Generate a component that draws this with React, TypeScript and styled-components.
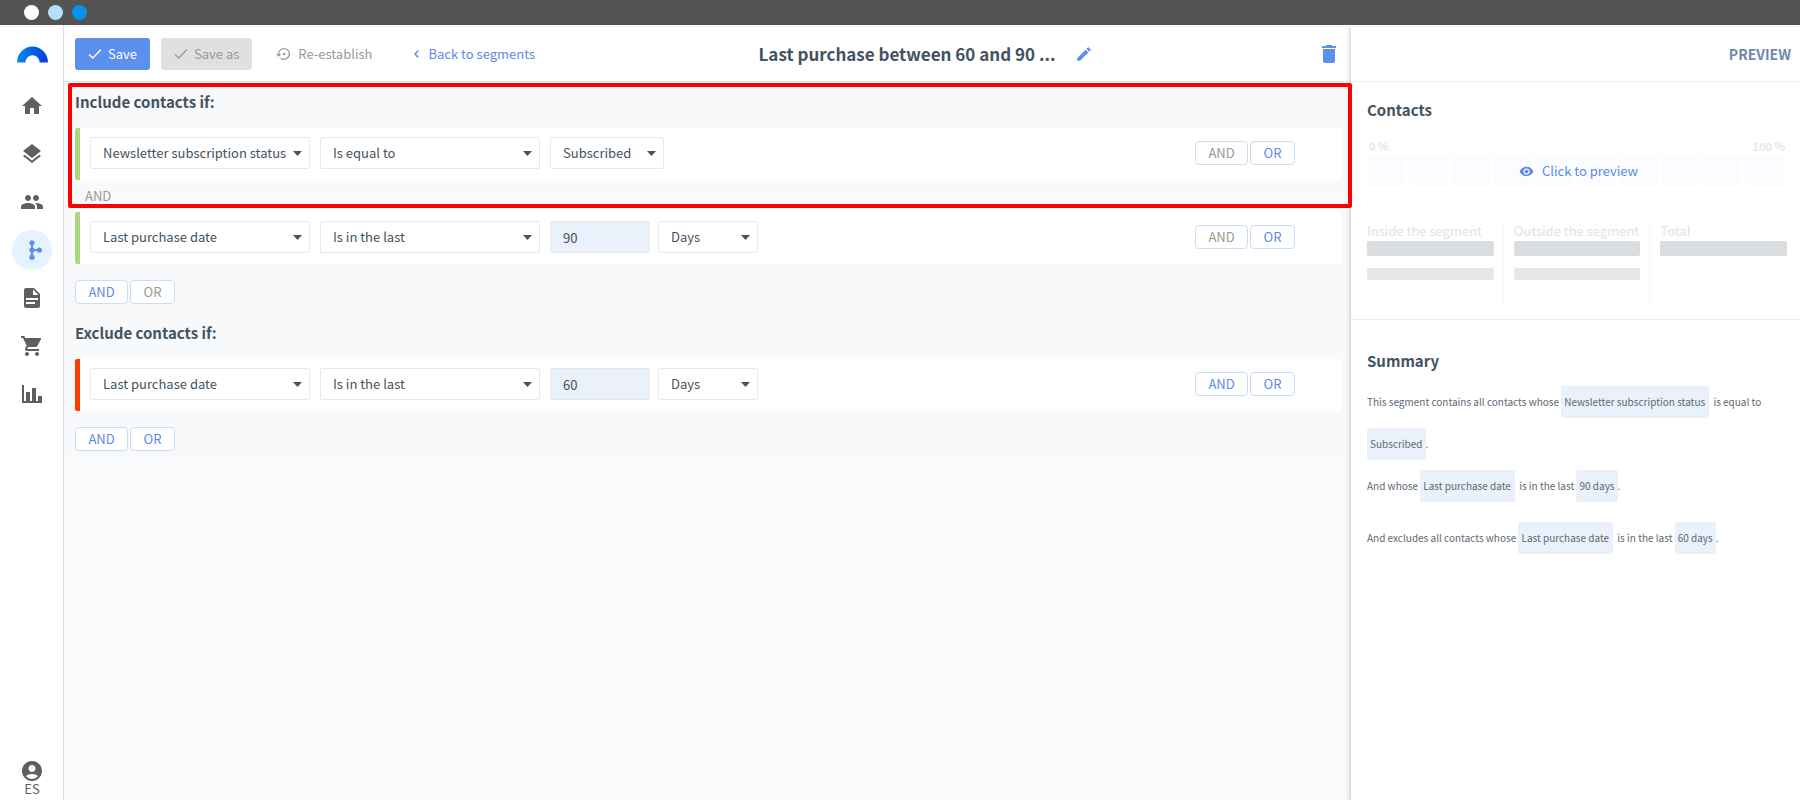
import React from 'react';
import styled, { createGlobalStyle } from 'styled-components';
import {
  MdAccountCircle,
  MdDelete,
  MdEdit,
  MdHome,
  MdLayers,
  MdPeople,
  MdSettingsBackupRestore,
  MdShoppingCart,
  MdVisibility,
} from 'react-icons/md';

const GlobalStyle = createGlobalStyle`
  *, *::before, *::after { box-sizing: border-box; }
  body {
    margin: 0;
    background: #fff;
    color: #43535f;
    font-family: 'Noto Sans CJK SC', 'Noto Sans', sans-serif;
    font-size: 13px;
    line-height: 20px;
  }
  button, input, select { font: inherit; color: inherit; margin: 0; }
  h1, h2, p { margin: 0; }
`;

const Page = styled.div`
  display: flex;
  flex-direction: column;
  min-height: 100vh;
`;

const WindowBar = styled.div`
  display: flex;
  align-items: center;
  gap: 9px;
  height: 25px;
  padding-left: 24px;
  background: #535353;
`;

const WindowDot = styled.span<{ $color: string }>`
  width: 15px;
  height: 15px;
  border-radius: 50%;
  background: ${(p) => p.$color};
`;

const Shell = styled.div`
  flex: 1;
  display: grid;
  grid-template-columns: 64px minmax(0, 1fr) 449px;
`;

const Sidebar = styled.nav`
  display: flex;
  flex-direction: column;
  align-items: center;
  padding: 21px 0 5px;
  box-shadow: inset -1px 0 #dcdcdc;
  color: #5f5f5f;
`;

const Logo = styled.a`
  display: block;
  height: 40px;
`;

const NavList = styled.div`
  display: flex;
  flex-direction: column;
  gap: 8px;
`;

const NavItem = styled.a<{ $active?: boolean }>`
  display: flex;
  align-items: center;
  justify-content: center;
  width: 40px;
  height: 40px;
  border-radius: 50%;
  color: ${(p) => (p.$active ? '#5c90ee' : 'inherit')};
  background: ${(p) => (p.$active ? '#e5f2ff' : 'transparent')};
`;

const Account = styled.button`
  display: flex;
  flex-direction: column;
  align-items: center;
  margin-top: auto;
  padding: 0;
  border: 0;
  background: none;
  font-size: 13px;
  line-height: 12px;
`;

const Editor = styled.main`
  display: flex;
  flex-direction: column;
  min-width: 0;
  background: #fafafa;
`;

const Header = styled.header`
  display: flex;
  align-items: center;
  height: 57px;
  padding: 2px 10px 0 11px;
  border-bottom: 1px solid #e6e7e9;
  background: #fff;
`;

const ActionButton = styled.button<{ $kind: 'primary' | 'muted' | 'plain' }>`
  display: flex;
  align-items: center;
  gap: 6px;
  height: 32px;
  padding: 0 13px;
  border: 0;
  border-radius: 3px;
  white-space: nowrap;
  color: ${(p) => (p.$kind === 'primary' ? '#fff' : '#999')};
  background: ${(p) => ({ primary: '#5c90ee', muted: '#e0e0e0', plain: 'transparent' })[p.$kind]};
`;

const Actions = styled.div`
  display: flex;
  align-items: center;
  gap: 11px;
`;

const BackLink = styled.a`
  display: flex;
  align-items: center;
  gap: 9px;
  margin-left: 29px;
  color: #5c8ae6;
  text-decoration: none;
  white-space: nowrap;
`;

const TitleArea = styled.div`
  flex: 1;
  display: flex;
  align-items: center;
  justify-content: center;
  gap: 20px;
  min-width: 0;
`;

const Title = styled.h1`
  overflow: hidden;
  font-size: 17px;
  line-height: 24px;
  font-weight: 700;
  text-overflow: ellipsis;
  white-space: nowrap;
`;

const IconButton = styled.button`
  display: flex;
  padding: 0;
  border: 0;
  background: none;
  color: #5c90ee;
`;

const Builder = styled.div`
  padding: 0 10px 0 11px;
  background: #f8f9fb;
`;

const Group = styled.section`
  position: relative;
`;

const GroupTitle = styled.h2`
  padding: 8px 0 14px;
  font-size: 15px;
  line-height: 24px;
  font-weight: 700;
`;

const Highlight = styled.div`
  position: absolute;
  top: 1px;
  left: -7px;
  right: -11px;
  height: 125px;
  border: 4px solid #f00;
  border-radius: 2px;
  pointer-events: none;
  z-index: 2;
`;

const Rule = styled.div<{ $tone: string }>`
  display: flex;
  align-items: center;
  gap: 10px;
  height: 52px;
  padding: 0 46px 2px 10px;
  border-left: 5px solid ${(p) => p.$tone};
  border-radius: 2px;
  background: #fff;
`;

const Joiner = styled.div`
  display: flex;
  align-items: center;
  gap: 5px;
  height: 32px;
  padding-left: 10px;
  color: #999;

  &::after {
    content: '';
    flex: 1;
    height: 1px;
    background: #fbfcfd;
  }
`;

const SelectBox = styled.span<{ $width: number }>`
  display: grid;
  align-items: center;
  width: ${(p) => p.$width}px;

  > * { grid-area: 1 / 1; }
  > svg { justify-self: end; margin-right: 8px; pointer-events: none; }
`;

const Select = styled.select`
  appearance: none;
  width: 100%;
  height: 32px;
  padding: 0 18px 0 12px;
  border: 1px solid #e6e8ea;
  border-radius: 2px;
  background: #fff;
`;

const Period = styled.div`
  display: flex;
  gap: 8px;
`;

const AmountInput = styled.input`
  width: 100px;
  height: 32px;
  padding: 0 12px;
  border: 1px solid #e6e8ea;
  border-radius: 2px;
  background: #eaf1fb;
`;

const LogicButtons = styled.div<{ $inRow?: boolean }>`
  display: flex;
  gap: 2px;
  margin-left: ${(p) => (p.$inRow ? 'auto' : '0')};
  padding: ${(p) => (p.$inRow ? '0' : '16px 0 9px')};
`;

const LogicButton = styled.button<{ $wide?: boolean }>`
  width: ${(p) => (p.$wide ? 53 : 45)}px;
  height: 24px;
  padding: 0;
  border: 1px solid #c9dcf8;
  border-radius: 4px;
  background: #fff;
  color: #5c8ae6;
  line-height: 22px;

  &:disabled { color: #999; }
`;

const Preview = styled.aside`
  z-index: 1;
  background: #fff;
  box-shadow: 0 2px 5px rgba(0, 0, 0, 0.3);
  clip-path: inset(0 0 0 -8px);
`;

const PreviewHeader = styled.header`
  display: flex;
  align-items: center;
  justify-content: flex-end;
  height: 57px;
  padding: 2px 9px 0 0;
  border-bottom: 1px solid #ebecee;
  color: #7088ab;
  font-size: 14px;
  font-weight: 700;
`;

const PreviewSection = styled.section`
  padding: 16px 13px 15px 16px;
  border-bottom: 1px solid #ebecee;
`;

const SummarySection = styled.section`
  padding: 29px 15px 29px 16px;
`;

const PreviewTitle = styled.h2`
  font-size: 15px;
  line-height: 24px;
  font-weight: 700;
`;

const Scale = styled.div`
  display: flex;
  justify-content: space-between;
  padding: 15px 2px 0 2px;
  color: #e6e7e9;
  font-size: 11px;
  line-height: 19px;
  font-weight: 700;
`;

const Gauge = styled.div`
  display: grid;
  align-items: center;
  margin-right: 3px;

  > * { grid-area: 1 / 1; }
`;

const GaugeCells = styled.div`
  display: grid;
  grid-template-columns: repeat(10, 1fr);
  gap: 3px;
  height: 30px;
`;

const GaugeCell = styled.span`
  background: #fbfcff;
`;

const PreviewButton = styled.button`
  justify-self: center;
  display: flex;
  align-items: center;
  gap: 8px;
  padding: 0 0 0 6px;
  border: 0;
  background: none;
  color: #5c8ae6;
`;

const Stats = styled.div`
  display: grid;
  grid-template-columns: repeat(3, minmax(0, 1fr));
  column-gap: 20px;
  padding-top: 35px;
`;

const Stat = styled.div`
  display: flex;
  flex-direction: column;
  height: 83px;
  color: #dfe2e4;
  line-height: 20px;
  white-space: nowrap;

  & + & {
    margin-left: -11px;
    padding-left: 10px;
    border-left: 1px solid #f6f7f8;
  }
`;

const Placeholder = styled.span<{ $small?: boolean }>`
  height: ${(p) => (p.$small ? 12 : 15)}px;
  margin-top: ${(p) => (p.$small ? 12 : 0)}px;
  border-radius: 2px;
  background: ${(p) => (p.$small ? '#e6e7e8' : '#dadddf')};
`;

const SummaryText = styled.div`
  margin-top: 8px;
  color: #5d6974;
  font-size: 10px;
  line-height: 42px;
`;

const Sentence = styled.p<{ $apart?: boolean }>`
  margin-top: ${(p) => (p.$apart ? 10 : 0)}px;
`;

const Chip = styled.span<{ $field?: boolean }>`
  display: inline-block;
  margin: 0 ${(p) => (p.$field ? 2 : 0)}px 0 0;
  padding: 0 ${(p) => (p.$field ? 4 : 3)}px 0 3px;
  border-radius: 2px;
  background: #eaf1fb;
  line-height: 32px;
`;

const Check = () => (
  <svg width="14" height="12" viewBox="0 0 14 12" fill="none" stroke="currentColor" strokeWidth="1.3" aria-hidden>
    <path d="M1 6.5 4.8 10 13 1.5" />
  </svg>
);

const Caret = () => (
  <svg width="9" height="5" viewBox="0 0 9 5" fill="#43535f" aria-hidden>
    <path d="M0 0h9L4.5 5z" />
  </svg>
);

const Chevron = () => (
  <svg width="5" height="8" viewBox="0 0 5 8" fill="none" stroke="currentColor" strokeWidth="1.4" aria-hidden>
    <path d="M4.3.6 1 4l3.3 3.4" />
  </svg>
);

const BranchIcon = () => (
  <svg width="24" height="24" viewBox="0 0 24 24" fill="currentColor" aria-hidden>
    <path d="M12 5v14M12 12h7.5" stroke="currentColor" strokeWidth="2" />
    <circle cx="12" cy="4.8" r="2.6" />
    <circle cx="12" cy="12" r="2.6" />
    <circle cx="12" cy="19.2" r="2.6" />
    <circle cx="19.4" cy="12" r="2.6" />
  </svg>
);

const DocumentIcon = () => (
  <svg width="24" height="24" viewBox="0 0 24 24" fill="currentColor" fillRule="evenodd" aria-hidden>
    <path d="M6 2h8l6 6v12a2 2 0 0 1-2 2H6a2 2 0 0 1-2-2V4a2 2 0 0 1 2-2zm7 1.5V9h5.5zM6 12v2h12v-2zm0 4v2h9v-2z" />
  </svg>
);

const ChartIcon = () => (
  <svg width="24" height="24" viewBox="0 0 24 24" fill="currentColor" aria-hidden>
    <path d="M2 3h2v16h18v2H2zM6 10h4v9H6zM12 6h4v13h-4zM18 14h4v5h-4z" />
  </svg>
);

const Dropdown = ({ label, width, options }: { label: string; width: number; options: string[] }) => (
  <SelectBox $width={width}>
    <Select aria-label={label} defaultValue={options[0]}>
      {options.map((o) => (
        <option key={o}>{o}</option>
      ))}
    </Select>
    <Caret />
  </SelectBox>
);

const Logic = ({ inRow, and = true, or = true }: { inRow?: boolean; and?: boolean; or?: boolean }) => (
  <LogicButtons $inRow={inRow}>
    <LogicButton $wide disabled={!and}>AND</LogicButton>
    <LogicButton disabled={!or}>OR</LogicButton>
  </LogicButtons>
);

const DateRule = ({ tone, days, and }: { tone: string; days: string; and: boolean }) => (
  <Rule $tone={tone}>
    <Dropdown label="Field" width={220} options={['Last purchase date', 'Newsletter subscription status']} />
    <Dropdown label="Condition" width={220} options={['Is in the last', 'Is not in the last']} />
    <Period>
      <AmountInput aria-label="Amount" defaultValue={days} />
      <Dropdown label="Unit" width={100} options={['Days', 'Weeks', 'Months']} />
    </Period>
    <Logic inRow and={and} />
  </Rule>
);

const GREEN = '#aed581';
const RED = '#ff3d00';

export default function App() {
  return (
    <Page>
      <GlobalStyle />
      <WindowBar>
        <WindowDot $color="#fff" />
        <WindowDot $color="#b3e0fb" />
        <WindowDot $color="#0693ee" />
      </WindowBar>
      <Shell>
        <Sidebar aria-label="Main">
          <Logo href="#" aria-label="Dashboard">
            <svg width="31" height="17" viewBox="0 0 31 17" aria-hidden>
              <defs>
                <linearGradient id="arch">
                  <stop offset="0" stopColor="#0b8cf0" />
                  <stop offset="0.5" stopColor="#0560e2" />
                  <stop offset="1" stopColor="#0540d8" />
                </linearGradient>
              </defs>
              <path d="M0 16.5a15.5 16 0 0 1 31 0h-8.5a7 7.3 0 0 0-14 0z" fill="url(#arch)" />
            </svg>
          </Logo>
          <NavList>
            <NavItem href="#" aria-label="Home"><MdHome size={24} /></NavItem>
            <NavItem href="#" aria-label="Campaigns"><MdLayers size={24} /></NavItem>
            <NavItem href="#" aria-label="Contacts"><MdPeople size={24} /></NavItem>
            <NavItem href="#" aria-label="Segments" $active><BranchIcon /></NavItem>
            <NavItem href="#" aria-label="Content"><DocumentIcon /></NavItem>
            <NavItem href="#" aria-label="Store"><MdShoppingCart size={24} /></NavItem>
            <NavItem href="#" aria-label="Reports"><ChartIcon /></NavItem>
          </NavList>
          <Account>
            <MdAccountCircle size={24} />
            ES
          </Account>
        </Sidebar>

        <Editor>
          <Header>
            <Actions>
              <ActionButton $kind="primary"><Check />Save</ActionButton>
              <ActionButton $kind="muted"><Check />Save as</ActionButton>
              <ActionButton $kind="plain"><MdSettingsBackupRestore size={16} />Re-establish</ActionButton>
            </Actions>
            <BackLink href="#"><Chevron />Back to segments</BackLink>
            <TitleArea>
              <Title>Last purchase between 60 and 90 ...</Title>
              <IconButton aria-label="Rename"><MdEdit size={18} /></IconButton>
            </TitleArea>
            <IconButton aria-label="Delete"><MdDelete size={24} /></IconButton>
          </Header>
          <Builder>
            <Group>
              <Highlight />
              <GroupTitle>Include contacts if:</GroupTitle>
              <Rule $tone={GREEN}>
                <Dropdown label="Field" width={220} options={['Newsletter subscription status', 'Last purchase date']} />
                <Dropdown label="Condition" width={220} options={['Is equal to', 'Is not equal to']} />
                <Dropdown label="Value" width={114} options={['Subscribed', 'Unsubscribed']} />
                <Logic inRow and={false} />
              </Rule>
              <Joiner>AND</Joiner>
              <DateRule tone={GREEN} days="90" and={false} />
              <Logic or={false} />
            </Group>
            <Group>
              <GroupTitle>Exclude contacts if:</GroupTitle>
              <DateRule tone={RED} days="60" and />
              <Logic />
            </Group>
          </Builder>
        </Editor>

        <Preview>
          <PreviewHeader>PREVIEW</PreviewHeader>
          <PreviewSection>
            <PreviewTitle>Contacts</PreviewTitle>
            <Scale><span>0 %</span><span>100 %</span></Scale>
            <Gauge>
              <GaugeCells>
                {Array.from({ length: 10 }, (_, i) => (
                  <GaugeCell key={i} />
                ))}
              </GaugeCells>
              <PreviewButton><MdVisibility size={15} />Click to preview</PreviewButton>
            </Gauge>
            <Stats>
              <Stat>Inside the segment<Placeholder /><Placeholder $small /></Stat>
              <Stat>Outside the segment<Placeholder /><Placeholder $small /></Stat>
              <Stat>Total<Placeholder /></Stat>
            </Stats>
          </PreviewSection>
          <SummarySection>
            <PreviewTitle>Summary</PreviewTitle>
            <SummaryText>
              <Sentence>
                This segment contains all contacts whose <Chip $field>Newsletter subscription status</Chip> is equal to{' '}
                <Chip>Subscribed</Chip>.
              </Sentence>
              <Sentence>
                And whose <Chip $field>Last purchase date</Chip> is in the last <Chip>90 days</Chip>.
              </Sentence>
              <Sentence $apart>
                And excludes all contacts whose <Chip $field>Last purchase date</Chip> is in the last <Chip>60 days</Chip>.
              </Sentence>
            </SummaryText>
          </SummarySection>
        </Preview>
      </Shell>
    </Page>
  );
}
